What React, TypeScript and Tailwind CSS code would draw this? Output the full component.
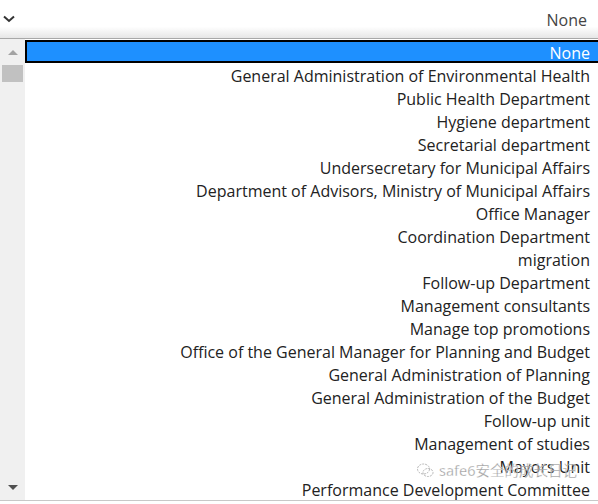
import React from 'react';

const options = [
  'None',
  'General Administration of Environmental Health',
  'Public Health Department',
  'Hygiene department',
  'Secretarial department',
  'Undersecretary for Municipal Affairs',
  'Department of Advisors, Ministry of Municipal Affairs',
  'Office Manager',
  'Coordination Department',
  'migration',
  'Follow-up Department',
  'Management consultants',
  'Manage top promotions',
  'Office of the General Manager for Planning and Budget',
  'General Administration of Planning',
  'General Administration of the Budget',
  'Follow-up unit',
  'Management of studies',
  'Mayors Unit',
  'Performance Development Committee',
];

export default function App() {
  const selected = 0;

  return (
    <div
      className="relative w-[598px] h-[504px] overflow-hidden bg-white text-[#222]"
      style={{ fontFamily: '"Open Sans", "Noto Sans", sans-serif' }}
    >
      {/* 選擇框 */}
      <div className="flex h-[39px] items-center justify-between pl-[3px] pr-[11px] pt-[2px] bg-gradient-to-b from-white from-70% to-[#e6e6e6] border-b border-[#a8a8a8]">
        <svg width="12" height="8" viewBox="0 0 12 8" className="-mt-[3px]">
          <polyline points="1,1.5 6,6 11,1.5" fill="none" stroke="#333" strokeWidth="2" />
        </svg>
        <span className="text-[16px] text-[#444]">None</span>
      </div>

      {/* 下拉清單 */}
      <div className="flex h-[462px] border-b border-[#c8c8c8]">
        <div className="flex w-[25px] flex-col items-center bg-[#f0f0f0] pt-[11px] pb-[10px]">
          <svg width="10" height="5" viewBox="0 0 10 5">
            <polygon points="0,5 5,0 10,5" fill="#a3a3a3" />
          </svg>
          <div className="mt-[10px] h-[17px] w-[21px] bg-[#c1c1c1]" />
          <div className="flex-1" />
          <svg width="10" height="5" viewBox="0 0 10 5">
            <polygon points="0,0 10,0 5,5" fill="#505050" />
          </svg>
        </div>
        <div className="flex-1 overflow-hidden pt-[1px]">
          {options.map((label, i) =>
            i === selected ? (
              <div
                key={label}
                className="h-[23px] overflow-visible whitespace-nowrap border-2 border-r-0 border-black bg-[#1e90ff] pr-[8px] text-right text-[16px] leading-[23px] text-white"
              >
                {label}
              </div>
            ) : (
              <div key={label} className="h-[23px] whitespace-nowrap pr-[8px] text-right text-[16px] leading-[27px]">
                {label}
              </div>
            )
          )}
        </div>
      </div>

      {/* 浮水印 */}
      <div className="absolute left-[417px] top-[461px] flex items-center gap-[5px] text-[#8c8c8c] opacity-85">
        <svg width="17" height="15" viewBox="0 0 17 15">
          <ellipse cx="6.5" cy="6" rx="6" ry="5" fill="none" stroke="#aaa" strokeWidth="1" strokeDasharray="2 1" />
          <ellipse cx="11" cy="9.5" rx="5" ry="4" fill="none" stroke="#aaa" strokeWidth="1" strokeDasharray="2 1" />
        </svg>
        <span
          className="text-[14.5px] leading-[18px]"
          style={{ fontFamily: '"Noto Sans", "Noto Sans CJK SC", sans-serif', WebkitTextStroke: '0.3px #fff' }}
        >
          safe6安全的成长日记
        </span>
      </div>
    </div>
  );
}
